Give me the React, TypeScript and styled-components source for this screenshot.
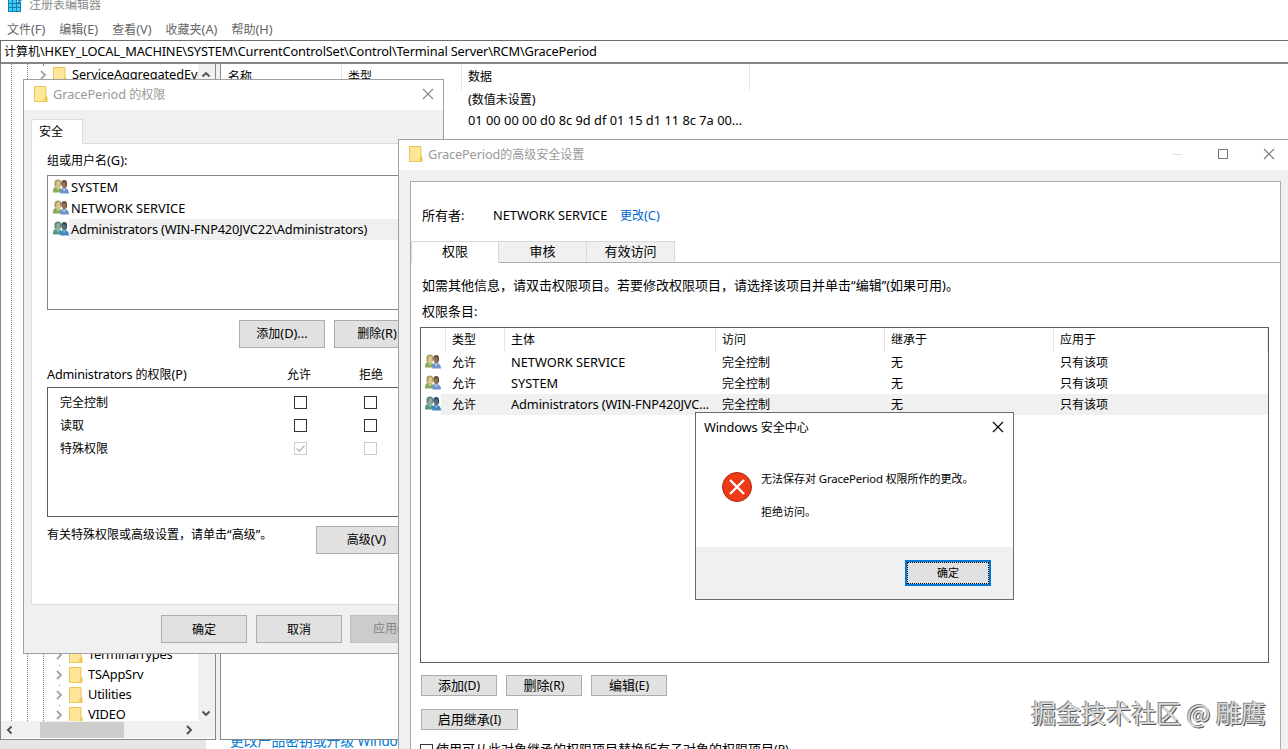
import React from 'react';
import styled, { createGlobalStyle } from 'styled-components';

const GlobalStyle = createGlobalStyle`
  * {
    box-sizing: border-box;
  }

  body {
    margin: 0;
    overflow: hidden;
    background: #fff;
    color: #000;
    font-family: "Noto Sans", "Noto Sans CJK SC", sans-serif;
    font-size: 12px;
    line-height: 20px;
  }
`;

/* ---------- text ---------- */

const Line = styled.span<{ $size?: number; $color?: string }>`
  display: block;
  white-space: pre;
  font-family: "Noto Sans CJK SC", sans-serif;
  font-size: ${p => p.$size ?? 12}px;
  color: ${p => p.$color ?? 'inherit'};
  transform: translateY(-1px);
`;

const Latin = styled.span<{ $size: number; $spacing: number }>`
  font-family: "Noto Sans", "Open Sans", sans-serif;
  font-size: ${p => p.$size}px;
  letter-spacing: ${p => p.$spacing}px;
`;

type TextProps = {
  children: string;
  size?: number;
  latin?: number;
  spacing?: number;
  color?: string;
};

// Latin runs are set slightly larger than the Chinese glyphs around them,
// and runs with lowercase letters are tightened a little
const Text: React.FC<TextProps> = ({ children, size, latin = 12.8, spacing, color }) => (
  <Line $size={size} $color={color}>
    {children.split(/([\x20-\x7e“”]+)/).map((part, i) =>
      i % 2 ? (
        <Latin key={i} $size={latin} $spacing={spacing ?? (/[a-z]{2}/.test(part) ? -0.17 : 0)}>
          {part}
        </Latin>
      ) : (
        part
      )
    )}
  </Line>
);

/* ---------- shared parts ---------- */

const Desktop = styled.div`
  position: relative;
  width: 1288px;
  height: 749px;
  overflow: hidden;
  background: #fff;
`;

const Window = styled.section<{ $x: number; $y: number; $w: number; $h: number; $border?: string }>`
  position: absolute;
  left: ${p => p.$x}px;
  top: ${p => p.$y}px;
  width: ${p => p.$w}px;
  height: ${p => p.$h}px;
  display: flex;
  flex-direction: column;
  background: #f0f0f0;
  border: 1px solid ${p => p.$border ?? '#a0a0a0'};
`;

const TitleBar = styled.header`
  display: flex;
  align-items: center;
  height: 30px;
  flex: none;
  padding-left: 10px;
  gap: 5px;
  background: #fff;

  svg {
    margin-bottom: 2px;
  }
`;

const Spacer = styled.div`
  flex: 1;
`;

const Button = styled.button<{ $w?: number; $h?: number; $disabled?: boolean }>`
  display: flex;
  align-items: center;
  justify-content: center;
  flex: none;
  width: ${p => p.$w ?? 86}px;
  height: ${p => p.$h ?? 28}px;
  padding: 0;
  background: ${p => (p.$disabled ? '#cccccc' : '#e1e1e1')};
  border: 1px solid ${p => (p.$disabled ? '#bfbfbf' : '#adadad')};
  color: ${p => (p.$disabled ? '#838383' : '#000')};
`;

const CheckBox = styled.span<{ $muted?: boolean }>`
  display: block;
  flex: none;
  width: 13px;
  height: 13px;
  background: #fff;
  border: 1px solid ${p => (p.$muted ? '#cccccc' : '#333')};

  svg {
    display: block;
  }
`;

const FolderIcon = () => (
  <svg width="14" height="18" viewBox="0 0 14 18">
    <path d="M.5 1.5h11.5v10l1 .8v4.2H.5z" fill="#ffe693" stroke="#e9c658" />
    <path d="M1.5 2.5h9.5v12h-9.5z" fill="#ffe799" />
    <path d="M11 16.5v-4l1.5-1v5z" fill="#ffdc68" stroke="#e5bd42" strokeWidth=".8" />
  </svg>
);

const UsersIcon: React.FC<{ selected?: boolean }> = ({ selected }) => (
  <svg width="16" height="15" viewBox="0 0 16 15">
    <path d="M0 13.5c0-4 .6-5.5 4-5.5s5 2 5 5.5z" fill={selected ? '#53988b' : '#8ba85a'} />
    <path d="M3 8.5l2 3 2-3z" fill={selected ? '#8fc4b5' : '#c6d69a'} />
    <path d="M1.5 7.5V3.5C1.5 1.5 3 .5 5 .5s3.2 1 3.2 3v4z" fill={selected ? '#5d8282' : '#a99a5a'} />
    <ellipse cx="5.3" cy="5.3" rx="2" ry="3.2" fill={selected ? '#91a99b' : '#dbc493'} />
    <path d="M7.3 14.5c0-4 .7-5.5 3.7-5.5s5 2 5 5.5z" fill={selected ? '#3e86c4' : '#6d94cf'} />
    <path d="M9.5 9.5l1.5 3 2-3z" fill={selected ? '#81b7df' : '#b7cbe9'} />
    <path d="M8.3 6V4c0-2 1.2-3 3-3s2.7 1.2 2.7 3v3l-1.5 2z" fill={selected ? '#354e60' : '#65503f'} />
    <ellipse cx="10.9" cy="6.2" rx="1.9" ry="3" fill={selected ? '#5a6f7b' : '#9b7152'} />
  </svg>
);

const CloseIcon: React.FC<{ color?: string }> = ({ color = '#888' }) => (
  <svg width="12" height="12" viewBox="0 0 12 12">
    <path d="M1 1l10 10M11 1L1 11" stroke={color} strokeWidth="1.1" />
  </svg>
);

const Chevron: React.FC<{ dir: 'up' | 'down' | 'left' | 'right'; color?: string; thick?: number }> = ({
  dir,
  color = '#505050',
  thick = 1.9,
}) => {
  const paths = {
    up: 'M1.5 6.5L5 3l3.5 3.5',
    down: 'M1.5 3.5L5 7l3.5-3.5',
    left: 'M6.5 1.5L3 5l3.5 3.5',
    right: 'M3 1L7 5 3 9',
  };
  return (
    <svg width="10" height="10" viewBox="0 0 10 10">
      <path d={paths[dir]} fill="none" stroke={color} strokeWidth={thick} />
    </svg>
  );
};

/* ---------- registry editor ---------- */

const Registry = styled.div`
  display: flex;
  flex-direction: column;
  height: 749px;
`;

const RegTitle = styled.div`
  display: flex;
  align-items: flex-start;
  height: 20px;
  padding-left: 7px;
  gap: 6px;

  > span {
    margin-top: -5px;
  }
`;

const MenuBar = styled.nav`
  display: flex;
  height: 20px;
  padding-left: 7px;
  gap: 14px;
`;

const AddressBar = styled.div`
  height: 24px;
  padding-left: 3px;
  border: solid #6e6e6e;
  border-width: 1px 0 2px 1px;
  border-bottom-color: #868686;
  line-height: 21px;
`;

const Panes = styled.div`
  display: flex;
  height: 676px;
  background: #f0f0f0;
`;

const TreePane = styled.div`
  display: flex;
  flex-direction: column;
  width: 216px;
  border: 1px solid #828790;
  border-top: none;
  background: #fff;
`;

const TreeBody = styled.div`
  display: flex;
  height: 657px;
`;

const Tree = styled.div`
  display: flex;
  flex: 1;
  overflow: hidden;
  padding-left: 10px;
`;

const dots = 'repeating-linear-gradient(#808080 0 1px, transparent 1px 2px)';

const Guide = styled.div`
  width: 1px;
  flex: none;
  margin-right: 15px;
  background: ${dots};
`;

const TreeRows = styled.div`
  flex: 1;
  min-width: 0;
  padding-top: 1px;
  background: ${dots} 0 0 / 1px 100% no-repeat;
`;

const TreeRow = styled.div<{ $depth: number }>`
  display: flex;
  align-items: center;
  height: 20px;
  margin-left: ${p => p.$depth * 16 - 5}px;
  background: ${dots} 5px 0 / 1px 100% no-repeat;

  svg {
    flex: none;
    background: #fff;
  }

  svg:first-child {
    box-sizing: content-box;
    padding: 4px 0;
  }

  svg + svg {
    margin: 0 5px;
  }
`;

const HiddenRows = styled.div`
  height: 560px;
`;

const VScroll = styled.div`
  display: flex;
  flex-direction: column;
  align-items: flex-start;
  justify-content: space-between;
  width: 17px;
  padding: 6px 0 3px 3px;
  background: #f0f0f0;
`;

const HScroll = styled.div`
  display: flex;
  align-items: center;
  height: 17px;
  padding-left: 4px;
  background: #f0f0f0;
`;

const Thumb = styled.div`
  width: 84px;
  height: 16px;
  margin: 0 60px 0 25px;
  background: #cdcdcd;
`;

const ValuePane = styled.div`
  flex: 1;
  margin-left: 4px;
  border: solid #828790;
  border-width: 0 0 1px 1px;
  background: #fff;
`;

const ValueHeader = styled.div`
  display: flex;
  height: 26px;
`;

const ValueHeaderCell = styled.div<{ $w: number }>`
  width: ${p => p.$w}px;
  padding: 3px 0 0 7px;
  border-right: 1px solid #e5e5e5;

  & + & {
    padding-left: 6px;
  }
`;

const ValueRow = styled.div`
  height: 21px;
  padding-left: 247px;
`;

const Behind = styled.div`
  display: flex;
  height: 9px;
  overflow: hidden;
  padding-left: 206px;
  background: linear-gradient(to right, #e6e6e6 206px, #fff 206px);

  > span {
    margin: -9px 0 0 24px;
  }
`;

const RegistryIcon = () => (
  <svg width="16" height="12" viewBox="0 0 16 12">
    <path d="M1 0h9v2h4v10H1z" fill="#1180b4" />
    <path d="M2 0h3v3H2zM6 0h3v3H6zM2 4h3v3H2zM6 4h3v3H6zM10 4h3v3h-3zM2 8h3v3H2zM6 8h3v3H6zM10 8h3v3h-3z" fill="#3fcaf5" />
    <path d="M10 0h5l-2.5 2.5z" fill="#1793c8" />
  </svg>
);

const menus = ['文件(F)', '编辑(E)', '查看(V)', '收藏夹(A)', '帮助(H)'];

const RegistryEditor = () => (
  <Registry>
    <RegTitle>
      <RegistryIcon />
      <Text color="#8c8c8c">注册表编辑器</Text>
    </RegTitle>
    <MenuBar>
      {menus.map(m => (
        <Text key={m} color="#666">{m}</Text>
      ))}
    </MenuBar>
    <AddressBar>
      <Text>{'计算机\\HKEY_LOCAL_MACHINE\\SYSTEM\\CurrentControlSet\\Control\\Terminal Server\\RCM\\GracePeriod'}</Text>
    </AddressBar>
    <Panes>
      <TreePane>
        <TreeBody>
          <Tree>
            <Guide />
            <Guide />
            <TreeRows>
              <TreeRow $depth={0}>
                <Chevron dir="right" color="#a6a6a6" />
                <FolderIcon />
                <Text spacing={-0.1}>ServiceAggregatedEvents</Text>
              </TreeRow>
              <HiddenRows />
              {['TerminalTypes', 'TSAppSrv', 'Utilities', 'VIDEO'].map(name => (
                <TreeRow key={name} $depth={1}>
                  <Chevron dir="right" color="#a6a6a6" />
                  <FolderIcon />
                  <Text spacing={-0.2}>{name}</Text>
                </TreeRow>
              ))}
            </TreeRows>
          </Tree>
          <VScroll>
            <Chevron dir="up" />
            <Chevron dir="down" />
          </VScroll>
        </TreeBody>
        <HScroll>
          <Chevron dir="left" />
          <Thumb />
          <Chevron dir="right" />
        </HScroll>
      </TreePane>
      <ValuePane>
        <ValueHeader>
          <ValueHeaderCell $w={121}><Text>名称</Text></ValueHeaderCell>
          <ValueHeaderCell $w={120}><Text>类型</Text></ValueHeaderCell>
          <ValueHeaderCell $w={288}><Text>数据</Text></ValueHeaderCell>
        </ValueHeader>
        <ValueRow><Text>(数值未设置)</Text></ValueRow>
        <ValueRow><Text spacing={0.02}>01 00 00 00 d0 8c 9d df 01 15 d1 11 8c 7a 00...</Text></ValueRow>
      </ValuePane>
    </Panes>
    <Behind>
      <Text color="#0078d7" size={13.8} latin={13.5}>更改产品密钥或升级 Windows</Text>
    </Behind>
  </Registry>
);

/* ---------- GracePeriod permissions ---------- */

const SheetArea = styled.div`
  flex: 1;
  display: flex;
  flex-direction: column;
  padding: 9px 7px 0;
`;

const SheetTab = styled.div`
  width: 52px;
  height: 25px;
  margin-bottom: -1px;
  padding: 2px 0 0 7px;
  border: 1px solid #dcdcdc;
  border-bottom: none;
  background: #fff;
  z-index: 1;
`;

const Sheet = styled.div`
  height: 462px;
  padding: 7px 15px 0;
  border: 1px solid #dcdcdc;
  background: #fff;
`;

const PrincipalList = styled.div`
  height: 135px;
  margin-top: 4px;
  padding: 1px 0;
  border: 1px solid #82868c;
`;

const PermList = styled.div`
  height: 130px;
  padding-top: 3px;
  border: 1px solid #5f5f62;
`;

const Principal = styled.div<{ $selected?: boolean }>`
  display: flex;
  align-items: center;
  height: 21px;
  gap: 2px;
  padding-left: 5px;
  background: ${p => (p.$selected ? 'linear-gradient(to right, #fff 21px, #f0f0f0 21px)' : 'none')};

  svg {
    margin-bottom: 2px;
  }
`;

const ButtonRow = styled.div<{ $pad?: string; $gap?: number }>`
  display: flex;
  gap: ${p => p.$gap ?? 9}px;
  padding: ${p => p.$pad ?? '0'};
`;

const ApplyButton = styled(Button)`
  margin-left: -1px;
`;

const PermHead = styled.div`
  display: grid;
  grid-template-columns: 240px 72px auto;
  height: 22px;
  margin-top: 17px;
`;

const PermRow = styled.div`
  display: grid;
  grid-template-columns: 234px 70px 13px;
  align-items: center;
  height: 23px;
  padding-left: 12px;
`;

const AdvancedRow = styled.div`
  display: flex;
  justify-content: space-between;
  padding: 9px 3px 0 0;

  > span {
    margin-top: -1px;
  }
`;

const CheckMark = () => (
  <svg width="11" height="11" viewBox="0 0 11 11">
    <path d="M1.5 5.5l2.8 2.8L9.5 2.5" fill="none" stroke="#b8b8b8" strokeWidth="1.3" />
  </svg>
);

const TitleClose = styled.div`
  display: flex;
  margin-right: 9px;
`;

const PermissionsWindow = () => (
  <Window $x={23} $y={79} $w={421} $h={575}>
    <TitleBar>
      <FolderIcon />
      <Text color="#999" spacing={-0.1}>GracePeriod 的权限</Text>
      <Spacer />
      <TitleClose><CloseIcon /></TitleClose>
    </TitleBar>
    <SheetArea>
      <SheetTab><Text>安全</Text></SheetTab>
      <Sheet>
        <Text>组或用户名(G):</Text>
        <PrincipalList>
          <Principal><UsersIcon /><Text>SYSTEM</Text></Principal>
          <Principal><UsersIcon /><Text>NETWORK SERVICE</Text></Principal>
          <Principal $selected>
            <UsersIcon selected />
            <Text>{'Administrators (WIN-FNP420JVC22\\Administrators)'}</Text>
          </Principal>
        </PrincipalList>
        <ButtonRow $pad="10px 0 0 192px">
          <Button><Text>添加(D)...</Text></Button>
          <Button><Text>删除(R)</Text></Button>
        </ButtonRow>
        <PermHead>
          <Text latin={12.6}>Administrators 的权限(P)</Text>
          <Text>允许</Text>
          <Text>拒绝</Text>
        </PermHead>
        <PermList>
          <PermRow><Text>完全控制</Text><CheckBox /><CheckBox /></PermRow>
          <PermRow><Text>读取</Text><CheckBox /><CheckBox /></PermRow>
          <PermRow>
            <Text>特殊权限</Text>
            <CheckBox $muted><CheckMark /></CheckBox>
            <CheckBox $muted />
          </PermRow>
        </PermList>
        <AdvancedRow>
          <Text>有关特殊权限或高级设置，请单击“高级”。</Text>
          <Button $w={101}><Text>高级(V)</Text></Button>
        </AdvancedRow>
      </Sheet>
      <ButtonRow $pad="10px 0 0 130px">
        <Button><Text>确定</Text></Button>
        <Button><Text>取消</Text></Button>
        <ApplyButton $disabled><Text>应用(A)</Text></ApplyButton>
      </ButtonRow>
    </SheetArea>
  </Window>
);

/* ---------- advanced security settings ---------- */

const WindowControls = styled.div`
  display: flex;
  align-items: center;
  gap: 34px;
  margin-right: 16px;
`;

const AdvancedPanel = styled.div`
  width: 871px;
  height: 620px;
  margin: 11px 0 0 11px;
  border: 1px solid #acacac;
  background: #fff;
`;

const OwnerRow = styled.div`
  display: grid;
  grid-template-columns: 71px 127px auto;
  padding: 24px 0 15px 11px;
`;

const TabStrip = styled.div`
  display: flex;
  height: 22px;
  border-bottom: 1px solid #acacac;
`;

const Tab = styled.div<{ $active?: boolean }>`
  display: flex;
  justify-content: center;
  width: 88px;
  height: ${p => (p.$active ? 22 : 21)}px;
  border: 1px solid #d9d9d9;
  border-left-width: ${p => (p.$active ? 1 : 0)}px;
  border-bottom: none;
  background: ${p => (p.$active ? '#fff' : '#f0f0f0')};
`;

const AdvancedBody = styled.div`
  padding: 13px 11px 0 9px;

  > span {
    margin: 0 0 6px 2px;
  }
`;

const EntryTable = styled.div`
  height: 336px;
  margin-top: -1px;
  border: 1px solid #5f5f62;
`;

const EntryRow = styled.div<{ $header?: boolean; $selected?: boolean }>`
  display: grid;
  grid-template-columns: 25px 59px 211px 169px 169px 1fr;
  height: ${p => (p.$header ? 24 : 21)}px;
  line-height: ${p => (p.$header ? 23 : 21)}px;
  background: ${p => (p.$selected ? 'linear-gradient(to right, #fff 20px, #f0f0f0 20px)' : 'none')};

  > div {
    padding-left: 6px;
    border-right: 1px solid ${p => (p.$header ? '#e5e5e5' : 'transparent')};
  }

  > div:first-child {
    padding: 2px 0 0 4px;
    line-height: 0;
  }
`;

const ReplaceRow = styled.div`
  display: flex;
  gap: 3px;
  padding-top: 10px;

  > i {
    margin-top: 4px;
  }
`;

const entries = [
  { name: 'NETWORK SERVICE' },
  { name: 'SYSTEM' },
  { name: 'Administrators (WIN-FNP420JVC...', selected: true },
];

const AdvancedWindow = () => (
  <Window $x={398} $y={139} $w={894} $h={640}>
    <TitleBar>
      <FolderIcon />
      <Text color="#999">GracePeriod的高级安全设置</Text>
      <Spacer />
      <WindowControls>
        <svg width="12" height="12" viewBox="0 0 12 12">
          <path d="M1 6.5h10" stroke="#e2e2e2" />
        </svg>
        <svg width="12" height="12" viewBox="0 0 12 12">
          <rect x="1.5" y="1.5" width="9" height="9" fill="none" stroke="#777" />
        </svg>
        <CloseIcon color="#777" />
      </WindowControls>
    </TitleBar>
    <AdvancedPanel>
      <OwnerRow>
        <Text size={13}>所有者:</Text>
        <Text>NETWORK SERVICE</Text>
        <Text color="#0066cc">更改(C)</Text>
      </OwnerRow>
      <TabStrip>
        <Tab $active><Text size={13}>权限</Text></Tab>
        <Tab><Text size={13}>审核</Text></Tab>
        <Tab><Text size={13}>有效访问</Text></Tab>
      </TabStrip>
      <AdvancedBody>
        <Text size={13}>如需其他信息，请双击权限项目。若要修改权限项目，请选择该项目并单击“编辑”(如果可用)。</Text>
        <Text size={13}>权限条目:</Text>
        <EntryTable>
          <EntryRow $header>
            <div />
            <div><Text>类型</Text></div>
            <div><Text>主体</Text></div>
            <div><Text>访问</Text></div>
            <div><Text>继承于</Text></div>
            <div><Text>应用于</Text></div>
          </EntryRow>
          {entries.map(e => (
            <EntryRow key={e.name} $selected={e.selected}>
              <div><UsersIcon selected={e.selected} /></div>
              <div><Text>允许</Text></div>
              <div><Text spacing={e.selected ? -0.12 : 0}>{e.name}</Text></div>
              <div><Text>完全控制</Text></div>
              <div><Text>无</Text></div>
              <div><Text>只有该项</Text></div>
            </EntryRow>
          ))}
        </EntryTable>
        <ButtonRow $pad="12px 0 0 1px">
          <Button $w={76} $h={21}><Text size={13} latin={12.2}>添加(D)</Text></Button>
          <Button $w={76} $h={21}><Text size={13} latin={12.2}>删除(R)</Text></Button>
          <Button $w={76} $h={21}><Text size={13} latin={12.2}>编辑(E)</Text></Button>
        </ButtonRow>
        <ButtonRow $pad="13px 0 0 1px">
          <Button $w={97} $h={21}><Text size={13} latin={12.2}>启用继承(I)</Text></Button>
        </ButtonRow>
        <ReplaceRow>
          <i><CheckBox /></i>
          <Text size={13} latin={12.2}>使用可从此对象继承的权限项目替换所有子对象的权限项目(P)</Text>
        </ReplaceRow>
      </AdvancedBody>
    </AdvancedPanel>
  </Window>
);

/* ---------- error message ---------- */

const AlertTitle = styled.div`
  display: flex;
  align-items: center;
  height: 30px;
  padding: 0 9px 0 8px;

  svg {
    margin-bottom: 2px;
  }
`;

const AlertMain = styled.div`
  flex: 1;
  background: #fff;
`;

const AlertBody = styled.div`
  display: flex;
  gap: 9px;
  padding: 26px 0 0 26px;
`;

const AlertMessage = styled.div`
  display: flex;
  flex-direction: column;
  gap: 12px;
`;

const AlertFooter = styled.div`
  display: flex;
  justify-content: flex-end;
  height: 52px;
  padding: 13px 22px 0 0;
`;

const DefaultButton = styled(Button)`
  border: 2px solid #0078d7;
  outline: 1px dotted #000;
  outline-offset: -3px;
`;

const AlertWindow = () => (
  <Window $x={695} $y={412} $w={319} $h={188} $border="#6b6b6e">
    <AlertMain>
      <AlertTitle>
        <Text>Windows 安全中心</Text>
        <Spacer />
        <CloseIcon color="#000" />
      </AlertTitle>
      <AlertBody>
        <svg width="30" height="36" viewBox="0 0 30 36">
          <circle cx="15" cy="18" r="14.5" fill="#f03a17" stroke="#a82a12" />
          <path d="M8 11l14 14M22 11L8 25" stroke="#fff" strokeWidth="2.4" />
        </svg>
        <AlertMessage>
          <Text size={11} latin={11.4}>无法保存对 GracePeriod 权限所作的更改。</Text>
          <Text size={11}>拒绝访问。</Text>
        </AlertMessage>
      </AlertBody>
    </AlertMain>
    <AlertFooter>
      <DefaultButton $h={26}><Text size={11}>确定</Text></DefaultButton>
    </AlertFooter>
  </Window>
);

const Watermark = styled.div`
  position: absolute;
  right: 22px;
  bottom: 19px;
  font-family: "Noto Sans CJK SC", sans-serif;
  font-size: 25px;
  line-height: 36px;
  white-space: pre;
  color: #dcdcdc;
  text-shadow: -1px -1px 0 #888, 1px 1px 0 #555;
`;

const App: React.FC = () => (
  <Desktop>
    <GlobalStyle />
    <RegistryEditor />
    <PermissionsWindow />
    <AdvancedWindow />
    <AlertWindow />
    <Watermark>掘金技术社区 @ 雕鹰</Watermark>
  </Desktop>
);

export default App;
